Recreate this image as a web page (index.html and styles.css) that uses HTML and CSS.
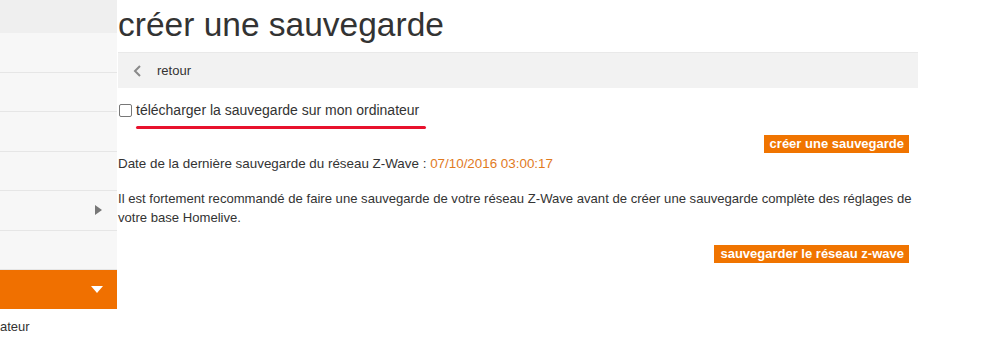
FILE: index.html
```html
<!DOCTYPE html>
<html lang="fr">
  <head>
    <meta charset="UTF-8" />
    <meta name="viewport" content="width=device-width, initial-scale=1.0" />
    <title>créer une sauvegarde</title>
    <link rel="stylesheet" href="styles.css">
  </head>
  <body>
    <div class="page">
      <aside class="sidebar">
        <div class="side-top"></div>
        <div class="side-item"></div>
        <div class="side-item"></div>
        <div class="side-item"></div>
        <div class="side-item"></div>
        <div class="side-item">
          <span class="arrow-right"></span>
        </div>
        <div class="side-item"></div>
        <div class="side-active">
          <span class="arrow-down"></span>
        </div>
        <p class="side-text">ateur</p>
      </aside>

      <main class="main">
        <h1>créer une sauvegarde</h1>
        <div class="back-bar">
          <svg class="chevron" width="9" height="12" viewBox="0 0 9 12">
            <polyline points="7,1 2,6 7,11" fill="none" stroke="#8a8a8a" stroke-width="2" />
          </svg>
          <span>retour</span>
        </div>

        <div class="content">
          <label class="check-row">
            <span class="checkbox"></span>
            télécharger la sauvegarde sur mon ordinateur
          </label>
          <div class="red-mark"></div>

          <div class="actions first">
            <button class="btn">créer une sauvegarde</button>
          </div>

          <p class="date-line">
            Date de la dernière sauvegarde du réseau Z-Wave :
            <span class="date">07/10/2016 03:00:17</span>
          </p>

          <p class="info">
            Il est fortement recommandé de faire une sauvegarde de votre réseau Z-Wave avant de créer une sauvegarde complète des réglages de votre base Homelive.
          </p>

          <div class="actions second">
            <button class="btn">sauvegarder le réseau z-wave</button>
          </div>
        </div>
      </main>
    </div>
  </body>
</html>
```

FILE: styles.css
```css
body {
  margin: 0;
  font-family: "Liberation Sans", Arial, sans-serif;
  color: #333;
  background-color: white;
}
.page {
  display: flex;
  gap: 1px;
}
.sidebar {
  width: 117px;
  flex-shrink: 0;
}
.side-top {
  height: 33px;
  background-color: #efefef;
}
.side-item {
  height: 38.5px;
  border-bottom: 1px solid #e6e6e6;
  background-color: #f7f7f7;
  display: flex;
  align-items: center;
  justify-content: flex-end;
  padding-right: 15px;
}
.arrow-right {
  width: 0;
  height: 0;
  border-top: 5px solid transparent;
  border-bottom: 5px solid transparent;
  border-left: 7px solid #777;
}
.side-active {
  height: 39px;
  background-color: #f07000;
  display: flex;
  align-items: center;
  justify-content: flex-end;
  padding-right: 14px;
}
.arrow-down {
  width: 0;
  height: 0;
  border-left: 6px solid transparent;
  border-right: 6px solid transparent;
  border-top: 7px solid white;
}
.side-text {
  margin: 9px 0 0;
  font-size: 13px;
  line-height: 18px;
  color: #333;
}
.main {
  width: 800px;
}
h1 {
  margin: 0;
  padding-top: 5px;
  font-size: 33.5px;
  font-weight: normal;
  line-height: 40px;
  color: #333;
}
.back-bar {
  margin-top: 7px;
  height: 35px;
  border-top: 1px solid #e9e9e9;
  background-color: #f2f2f2;
  display: flex;
  align-items: center;
  gap: 15px;
  padding-left: 15px;
  font-size: 13px;
}
.chevron {
  display: block;
}
.content {
  padding-right: 9px;
}
.check-row {
  display: flex;
  align-items: center;
  gap: 4px;
  margin-top: 12px;
  font-size: 14px;
  line-height: 20px;
}
.checkbox {
  width: 11px;
  height: 11px;
  margin-left: 1px;
  border: 1px solid #777;
  border-radius: 2px;
  background-color: white;
}
.red-mark {
  margin: 6px 0 0 18px;
  width: 290px;
  height: 3px;
  border-radius: 2px;
  background-color: #e8112d;
}
.actions {
  display: flex;
  justify-content: flex-end;
}
.actions.first {
  margin-top: 6px;
}
.actions.second {
  margin-top: 18px;
}
.btn {
  border: none;
  margin: 0;
  padding: 0 5px 0 6px;
  height: 18px;
  line-height: 18px;
  background-color: #f07400;
  color: white;
  font-family: "Liberation Sans", Arial, sans-serif;
  font-size: 13px;
  font-weight: bold;
}
.date-line {
  margin: 1px 0 0;
  font-size: 13.4px;
  line-height: 19px;
}
.date {
  color: #e17a1e;
}
.info {
  margin: 16px -9px 0 0;
  font-size: 13.1px;
  line-height: 19px;
}
```
